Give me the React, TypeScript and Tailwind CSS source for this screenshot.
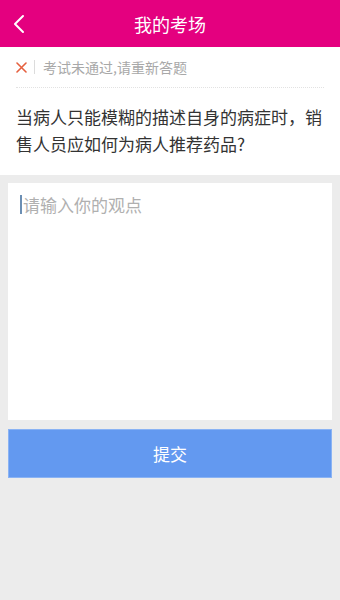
import React from 'react'

const font = { fontFamily: '"Noto Sans CJK SC", "Noto Sans", sans-serif' }

export default function App() {
  return (
    <div className="w-[340px] h-[600px] bg-[#ececec] flex flex-col" style={font}>
      {/* header */}
      <div className="h-[47px] bg-[#e4007f] flex items-center relative shrink-0">
        <svg className="absolute left-[13px] top-[14px]" width="12" height="20" viewBox="0 0 12 20">
          <path d="M10 2 L2 10 L10 18" fill="none" stroke="#fff" strokeWidth="2" strokeLinecap="round" strokeLinejoin="round" />
        </svg>
        <h1 className="w-full text-center text-white text-[18px] leading-none">我的考场</h1>
      </div>

      {/* status + question */}
      <div className="bg-white px-4 shrink-0 h-[128px]">
        <div className="flex items-center h-[41px] border-b border-dotted border-[#e2e2e2]">
          <svg width="11" height="11" viewBox="0 0 11 11" className="shrink-0">
            <path d="M1 1 L10 10 M10 1 L1 10" stroke="#e5603f" strokeWidth="1.6" strokeLinecap="round" />
          </svg>
          <div className="w-px h-[14px] bg-[#dcdcdc] ml-[7px] mr-[8px]" />
          <span className="text-[14px] text-[#a8a8a8]">考试未通过,请重新答题</span>
        </div>
        <p className="text-[17px] leading-[27px] text-[#333] mt-[15px]">
          当病人只能模糊的描述自身的病症时，销售人员应如何为病人推荐药品?
        </p>
      </div>

      {/* answer box */}
      <div className="px-2 pt-2">
        <div className="bg-white h-[237px] px-3 pt-[9px]">
          <div className="flex items-center text-[17px] text-[#b0b0b0]">
            <span className="w-[2px] h-[19px] bg-[#6c8fb4] mr-[1px]" />
            请输入你的观点
          </div>
        </div>
        <button className="mt-[9px] w-full h-[49px] bg-[#6399f0] border border-[#8ab3f4] text-white text-[17px]">
          提交
        </button>
      </div>
    </div>
  )
}
